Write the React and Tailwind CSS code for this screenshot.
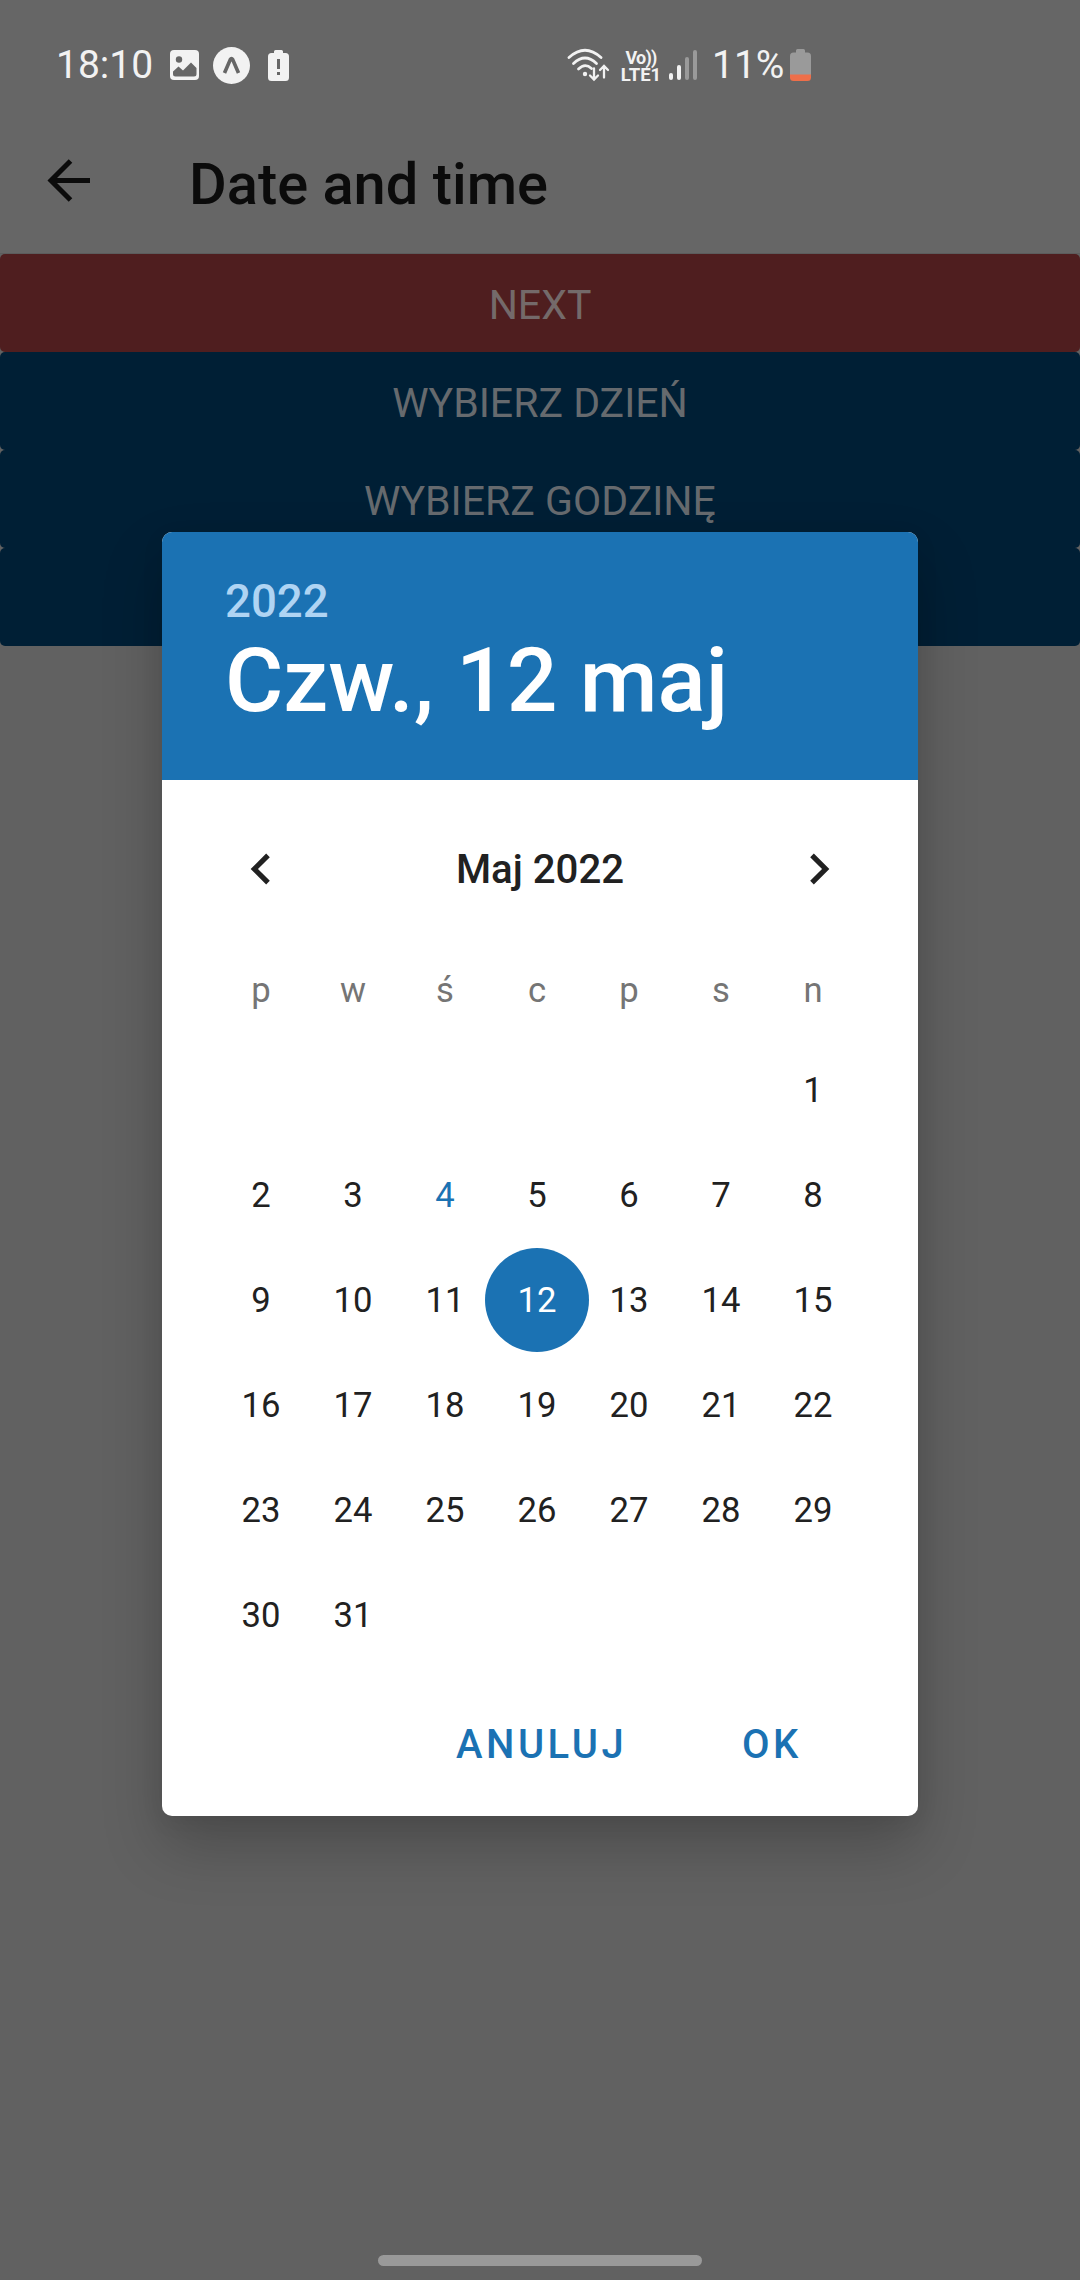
import React from "react";

const WEEKDAYS = ["p", "w", "ś", "c", "p", "s", "n"];
const BUTTONS = [
  { label: "NEXT", color: "bg-[#4f1e1f] text-[#746a6a]" },
  { label: "WYBIERZ DZIEŃ", color: "bg-[#001f35] text-[#666a6e]" },
  { label: "WYBIERZ GODZINĘ", color: "bg-[#001f35] text-[#666a6e]" },
  { label: "", color: "bg-[#001f35] text-[#666a6e]" },
];

function StatusBar() {
  return (
    <div className="flex h-[130px] shrink-0 items-center text-[#f2f2f2]">
      <span className="ml-[56px] w-[98px] pt-px text-[39px] leading-none">18:10</span>
      <svg className="ml-4 shrink-0" width="29" height="30" viewBox="0 0 29 30">
        <rect width="29" height="30" rx="4" fill="#f2f2f2" />
        <circle cx="9" cy="9.5" r="3.2" fill="#666" />
        <path d="M3 21.500 8.500 16.500 13 20.500 21 12.500 26.500 18V24Q26.500 26.500 24 26.500H5.500Q3 26.500 3 24Z" fill="#666" />
      </svg>
      <svg className="ml-[14px] shrink-0" width="37" height="37" viewBox="0 0 37 37">
        <circle cx="18.500" cy="18.500" r="18.500" fill="#f2f2f2" />
        <path d="M11.500 26 17.300 12.500Q18.500 10.500 19.700 12.500L25.500 26" fill="none" stroke="#666" strokeWidth="3.600" />
      </svg>
      <svg className="ml-[18px] shrink-0" width="21" height="31" viewBox="0 0 21 31">
        <path d="M6 3V1.500Q6 0 7.500 0H13.500Q15 0 15 1.500V3H17.500Q21 3 21 6.500V27.500Q21 31 17.500 31H3.500Q0 31 0 27.500V6.500Q0 3 3.500 3Z" fill="#f2f2f2" />
        <path d="M9 9H12V19H9ZM9 22H12V25H9Z" fill="#666" />
      </svg>
      <svg className="ml-[278px] shrink-0" width="43" height="34" viewBox="0 0 43 34" fill="none" stroke="#f2f2f2" strokeLinecap="round">
        <path d="M2 9.500Q18-5 34 9.500" strokeWidth="2.800" />
        <path d="M6.500 15.500Q18 4.500 29.500 15.500" strokeWidth="2.800" />
        <path d="M11.500 21Q18 14.500 24.500 20.500" strokeWidth="2.800" />
        <circle cx="18" cy="26" r="2.200" fill="#f2f2f2" stroke="none" />
        <path d="M27 20.500V31M23 27.500 27 31.500 31 27.500M37 29.500V18.500M33 22 37 18 41 22" strokeWidth="2.300" />
      </svg>
      <div className="ml-[11px] flex w-[40px] flex-col items-center pt-[4px] text-center font-bold">
        <span className="text-[18px] leading-[16px] tracking-[-0.8px]">Vo))</span>
        <span className="text-[18.500px] leading-[19px]">LTE1</span>
      </div>
      <div className="ml-[8px] flex h-[30px] items-end gap-1">
        <div className="h-[7px] w-1 rounded-full bg-[#f2f2f2]" />
        <div className="h-[15px] w-1 rounded-full bg-[#f2f2f2]" />
        <div className="h-[23px] w-1 rounded-full bg-[#9a9a9a]" />
        <div className="h-[30px] w-1 rounded-full bg-[#9a9a9a]" />
      </div>
      <span className="ml-[15px] w-[74px] pt-px text-[39px] leading-none">11%</span>
      <svg className="ml-[4px] shrink-0" width="21" height="32" viewBox="0 0 21 32">
        <path d="M6 3.500V1.500Q6 0 7.500 0H13.500Q15 0 15 1.500V3.500H17.500Q21 3.500 21 7V26H0V7Q0 3.500 3.500 3.500Z" fill="#9a9a9a" />
        <path d="M0 25.500H21V28.500Q21 32 17.500 32H3.500Q0 32 0 28.500Z" fill="#ee6f4a" />
      </svg>
    </div>
  );
}

function DayCell({ day }) {
  if (day < 1 || day > 31) return <div />;
  if (day === 12)
    return (
      <div className="flex items-center justify-center pb-px">
        <div className="-mx-[6px] flex size-[104px] shrink-0 items-center justify-center rounded-full bg-[#1b72b3] text-white">
          12
        </div>
      </div>
    );
  return (
    <div className={day === 4 ? "flex items-center justify-center text-[#1b72b3]" : "flex items-center justify-center"}>
      {day}
    </div>
  );
}

function DatePicker() {
  return (
    <div className="flex h-[1284px] w-[756px] flex-col overflow-hidden rounded-[10px] bg-white text-[#212121]">
      <div className="flex h-[248px] shrink-0 flex-col bg-[#1b72b3] pl-[63px] font-medium">
        <div className="mt-[42px] h-[55px] text-[45.600px] leading-[56px] text-[#afd4f3]">2022</div>
        <div className="h-[104px] text-[89.300px] leading-[104px] whitespace-nowrap text-white">Czw., 12 maj</div>
      </div>
      <div className="mx-[53px] mt-[49px] flex h-[80px] items-center justify-between">
        <svg className="ml-[15px]" width="62" height="62" viewBox="0 0 24 24" fill="#212121">
          <path d="M15.410 7.410 14 6l-6 6 6 6 1.410-1.410L10.830 12z" />
        </svg>
        <span className="pt-px text-[40.200px] leading-[44px] font-medium">Maj 2022</span>
        <svg className="mr-[15px]" width="62" height="62" viewBox="0 0 24 24" fill="#212121">
          <path d="M10 6 8.590 7.410 13.170 12l-4.580 4.590L10 18l6-6z" />
        </svg>
      </div>
      <div className="mx-[53px] mt-[41px] grid h-[80px] w-[644px] grid-cols-7 items-center text-center text-[34.650px] leading-none text-[#757575]">
        {WEEKDAYS.map((d, i) => (
          <span key={i}>{d}</span>
        ))}
      </div>
      <div className="mx-[53px] mt-[8px] grid w-[644px] grid-cols-7 auto-rows-[105px] text-[34.650px] leading-none">
        {Array.from({ length: 42 }, (_, i) => (
          <DayCell key={i} day={i - 5} />
        ))}
      </div>
      <div className="mt-[47px] flex text-[40px] leading-[60px] font-medium tracking-[3.500px] text-[#1b72b3]">
        <span className="ml-[294px] w-[286px]">ANULUJ</span>
        <span>OK</span>
      </div>
    </div>
  );
}

export default function App() {
  return (
    <div className="relative flex h-[2280px] w-[1080px] flex-col overflow-hidden bg-[#616161] font-[Roboto,sans-serif]">
      <div className="flex h-[254px] shrink-0 flex-col border-b border-[#5c5c5c] bg-[#666]">
        <StatusBar />
        <div className="flex">
          <svg className="mt-[29px] ml-[47px] shrink-0" width="44" height="43" viewBox="0 0 44 43" fill="none" stroke="#0b0b0b" strokeWidth="5">
            <path d="M43 21.500H4M23.500 2 4 21.500 23.500 41" />
          </svg>
          <h1 className="ml-[98px] pt-[23px] text-[57.800px] leading-[62px] font-medium text-[#0b0b0b]">Date and time</h1>
        </div>
      </div>
      {BUTTONS.map((b, i) => (
        <button key={i} className={"h-[98px] w-full shrink-0 rounded-[5px] pt-[5px] text-[41px] leading-none " + b.color}>
          {b.label}
        </button>
      ))}
      <div className="mt-auto mb-[14px] h-[11px] w-[324px] self-center rounded-full bg-[#999]" />
      <div className="absolute top-[532px] left-[162px] rounded-[10px] shadow-[0_30px_60px_rgba(0,0,0,0.22),0_6px_24px_rgba(0,0,0,0.06)]">
        <DatePicker />
      </div>
    </div>
  );
}
